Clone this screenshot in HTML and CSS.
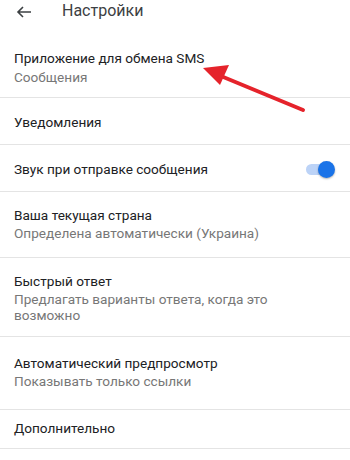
FILE: index.html
```html
<!DOCTYPE html>
<html lang="ru">
<head>
  <meta charset="UTF-8" />
  <meta name="viewport" content="width=device-width, initial-scale=1.0"/>
  <title>Настройки</title>
  <link rel="stylesheet" href="styles.css">
</head>
<body>

  <header class="topbar">
    <svg class="back" width="16" height="14" viewBox="0 0 16 14">
      <path d="M15 7H2M7 2L2 7l5 5" fill="none" stroke="#3c4043" stroke-width="1.6"/>
    </svg>
    <h1>Настройки</h1>
  </header>

  <main class="settings">
    <div class="item first">
      <div class="title">Приложение для обмена SMS</div>
      <div class="sub">Сообщения</div>
    </div>

    <div class="item single">
      <div class="title">Уведомления</div>
    </div>

    <div class="item single toggle-row">
      <div class="title">Звук при отправке сообщения</div>
      <span class="switch"><span class="thumb"></span></span>
    </div>

    <div class="item country">
      <div class="title">Ваша текущая страна</div>
      <div class="sub">Определена автоматически (Украина)</div>
    </div>

    <div class="item">
      <div class="title">Быстрый ответ</div>
      <div class="sub">Предлагать варианты ответа, когда это<br>возможно</div>
    </div>

    <div class="item preview">
      <div class="title">Автоматический предпросмотр</div>
      <div class="sub">Показывать только ссылки</div>
    </div>

    <div class="item last">
      <div class="title">Дополнительно</div>
    </div>
  </main>

  <!-- red pointer from the screenshot annotation -->
  <svg class="pointer" width="350" height="460" viewBox="0 0 350 460">
    <line x1="303" y1="110" x2="216" y2="74" stroke="#e5232b" stroke-width="4" stroke-linecap="round"/>
    <polygon points="203,68 229,65 220,85" fill="#e5232b"/>
  </svg>

</body>
</html>
```

FILE: styles.css
```css
:root {
  --text: #202124;
  --muted: #777777;
  --divider: #e4e4e4;
  --blue: #1a73e8;
}

body {
  margin: 0;
  font-family: Roboto, "Noto Sans", sans-serif;
  background: #fff;
  color: var(--text);
  position: relative;
  overflow: hidden;
}

.topbar {
  height: 35px;
  display: flex;
  align-items: flex-start;
  padding-left: 16px;
}

.back {
  margin-top: 5px;
}

.topbar h1 {
  margin: 0 0 0 30px;
  font-size: 16px;
  font-weight: 400;
  line-height: 22px;
  color: #3c4043;
}

.item {
  padding: 13px 14px 13px;
  border-bottom: 1px solid var(--divider);
}

.title {
  font-size: 13.6px;
  line-height: 20px;
}

.sub {
  font-size: 13.6px;
  line-height: 16px;
  color: var(--muted);
}

.first {
  padding-bottom: 11px;
}

.first .sub {
  line-height: 18px;
}

.single {
  padding-top: 14px;
  padding-bottom: 12px;
}

.country {
  padding-bottom: 16px;
}

.preview {
  padding-top: 16px;
  padding-bottom: 20px;
}

.last {
  padding-top: 8px;
  padding-bottom: 10px;
}

.toggle-row {
  display: flex;
  align-items: center;
  justify-content: space-between;
}

.switch {
  position: relative;
  width: 27px;
  height: 11px;
  margin-right: 3px;
  border-radius: 6px;
  background: #bcd3f7;
}

.switch .thumb {
  position: absolute;
  right: -2px;
  top: -3px;
  width: 17px;
  height: 17px;
  border-radius: 50%;
  background: var(--blue);
  box-shadow: 0 1px 2px rgba(0, 0, 0, 0.3);
}

.pointer {
  position: absolute;
  left: 0;
  top: 0;
  pointer-events: none;
}
```
